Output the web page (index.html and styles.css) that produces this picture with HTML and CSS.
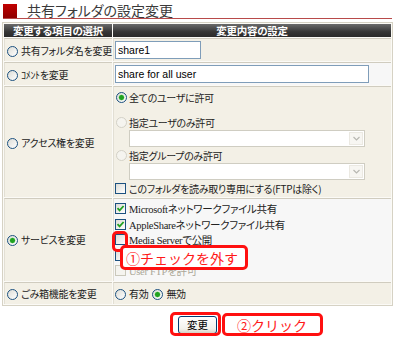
FILE: index.html
```html
<!DOCTYPE html>
<html lang="ja">
<head>
    <meta charset="UTF-8">
    <title>共有フォルダの設定変更</title>
    <link rel="stylesheet" href="styles.css">
</head>
<body>
<div class="page">
    <div class="title"><span class="mark"></span>共有フォルダの設定変更</div>

    <table class="form">
        <tr>
            <th class="col-item">変更する項目の選択</th>
            <th>変更内容の設定</th>
        </tr>
        <tr>
            <td class="item"><span class="rb"></span>共有フォルダ名を変更</td>
            <td class="val"><input class="txt short" type="text" value="share1"></td>
        </tr>
        <tr>
            <td class="item"><span class="rb"></span>ｺﾒﾝﾄを変更</td>
            <td class="val alt"><input class="txt long" type="text" value="share for all user"></td>
        </tr>
        <tr>
            <td class="item"><span class="rb"></span>アクセス権を変更</td>
            <td class="val access">
                <div class="opt"><span class="rb on"></span>全てのユーザに許可</div>
                <div class="opt gap"><span class="rb dis"></span>指定ユーザのみ許可</div>
                <div class="sel"><span class="arr"><svg width="7" height="5" viewBox="0 0 7 5"><path d="M0.5 1 L3.5 4 L6.5 1" fill="none" stroke="#b8b8b2" stroke-width="1.2"/></svg></span></div>
                <div class="opt"><span class="rb dis"></span>指定グループのみ許可</div>
                <div class="sel"><span class="arr"><svg width="7" height="5" viewBox="0 0 7 5"><path d="M0.5 1 L3.5 4 L6.5 1" fill="none" stroke="#b8b8b2" stroke-width="1.2"/></svg></span></div>
                <div class="opt last"><span class="cb"></span>このフォルダを読み取り専用にする(FTPは除く)</div>
            </td>
        </tr>
        <tr>
            <td class="item"><span class="rb on"></span>サービスを変更</td>
            <td class="val alt service">
                <div class="svc"><span class="cb"><svg width="9" height="9" viewBox="0 0 9 9"><path d="M1.5 4.2 L3.6 6.4 L7.6 2" fill="none" stroke="#21a121" stroke-width="1.8"/></svg></span>Microsoftネットワークファイル共有</div>
                <div class="svc"><span class="cb"><svg width="9" height="9" viewBox="0 0 9 9"><path d="M1.5 4.2 L3.6 6.4 L7.6 2" fill="none" stroke="#21a121" stroke-width="1.8"/></svg></span>AppleShareネットワークファイル共有</div>
                <div class="svc"><span class="cb"></span>Media Serverで公開</div>
                <div class="svc"><span class="cb"></span>iTunes Serverで公開</div>
                <div class="svc dis"><span class="cb dis"></span>User FTPを許可</div>
            </td>
        </tr>
        <tr>
            <td class="item"><span class="rb"></span>ごみ箱機能を変更</td>
            <td class="val trash"><span class="rb"></span>有効<span class="rb on second"></span>無効</td>
        </tr>
    </table>

    <div class="submit"><button class="btn" type="button">変更</button></div>

    <div class="note-frame frame-check"></div>
    <div class="note-text text-check">①チェックを外す</div>
    <div class="note-frame frame-btn"></div>
    <div class="note-text text-btn">②クリック</div>
</div>
</body>
</html>
```

FILE: styles.css
```css
body {
    margin: 0;
    background: #fff;
    font-family: "Noto Sans CJK JP", sans-serif;
    font-size: 10px;
    letter-spacing: -0.3px;
    font-feature-settings: "palt";
    color: #222;
}
.page {
    position: relative;
    width: 400px;
    height: 340px;
    padding: 3px 0 0 2px;
    box-sizing: border-box;
}
.title {
    display: flex;
    align-items: flex-end;
    width: 389px;
    height: 15px;
    margin-left: 1px;
    border-bottom: 1px solid #b84a4a;
    font-size: 14px;
    line-height: 15px;
    letter-spacing: 0;
    color: #3a3a3a;
}
.title .mark {
    width: 14px;
    height: 14px;
    margin-right: 10px;
    background: linear-gradient(#c20000, #8e0000);
}
.form {
    width: 391px;
    margin-top: 3px;
    border: 1px solid #d6d2c4;
    border-spacing: 1px;
    background: #fbfaf6;
    table-layout: fixed;
}
.form th {
    height: 13px;
    padding: 0;
    background: linear-gradient(#6a6a6a, #363636 60%, #2a2a2a);
    color: #fff;
    font-size: 10.5px;
    font-weight: bold;
    line-height: 13px;
}
.form th.col-item {
    width: 108px;
}
.form td {
    box-sizing: border-box;
    padding: 2px 1px;
    border-top: 1px solid #d0ccbf;
    border-left: 1px solid #e2dfd4;
    vertical-align: middle;
    background: #f3f0e6;
    white-space: nowrap;
}
.form td.item {
    padding-left: 2px;
}
.form td.alt {
    background: #f7f7f7;
}
.rb {
    display: inline-block;
    box-sizing: border-box;
    width: 11px;
    height: 11px;
    margin-right: 3px;
    border: 1px solid #1c5180;
    border-radius: 50%;
    background: linear-gradient(135deg, #dcdcd6, #fff);
    vertical-align: -2px;
}
.rb.on {
    background: radial-gradient(circle, #21a121 0, #21a121 2px, #6ccf6c 2.6px, transparent 3.2px), linear-gradient(135deg, #dcdcd6, #fff);
}
.rb.dis {
    border-color: #d3d1c7;
    background: #f5f4ef;
}
.cb {
    display: inline-flex;
    align-items: center;
    justify-content: center;
    box-sizing: border-box;
    width: 11px;
    height: 11px;
    margin-right: 3px;
    border: 1px solid #1c5180;
    background: linear-gradient(135deg, #dcdcd7, #fff);
    vertical-align: -2px;
}
.cb.dis {
    border-color: #cac8bb;
    background: #f5f4ef;
}
.txt {
    display: block;
    box-sizing: border-box;
    height: 18px;
    padding: 0 2px;
    border: 1px solid #7f9db9;
    background: #fff;
    font-family: "Liberation Sans", sans-serif;
    font-size: 10.5px;
    letter-spacing: 0;
    color: #000;
}
.txt.short {
    width: 86px;
}
.txt.long {
    width: 254px;
}
.access {
    padding: 2px 1px 0 2px;
}
.opt {
    display: flex;
    align-items: center;
    height: 16px;
}
.opt .rb {
    margin-left: 1px;
    margin-right: 2px;
}
.opt.gap {
    margin-top: 9px;
}
.opt.last {
    height: 14px;
    margin-top: 1px;
}
.sel {
    display: flex;
    justify-content: flex-end;
    align-items: center;
    box-sizing: border-box;
    width: 236px;
    height: 17px;
    margin-left: 14px;
    border: 1px solid #cfcdc2;
    background: #fff;
}
.sel .arr {
    display: flex;
    align-items: center;
    justify-content: center;
    box-sizing: border-box;
    width: 14px;
    height: 13px;
    margin-right: 1px;
    border: 1px solid #ebe9e2;
    background: #f7f6f2;
}
.service {
    padding: 2px 1px 0 2px;
}
.svc {
    display: flex;
    align-items: center;
    height: 15.5px;
    font-family: "Liberation Serif", "Noto Sans CJK JP", serif;
    font-size: 10.5px;
    letter-spacing: -0.3px;
}
.svc.dis {
    color: #aca899;
}
.trash {
    height: 22px;
    padding-left: 3px;
}
.trash .rb.second {
    margin-left: 4px;
}
.submit {
    width: 391px;
    margin-top: 10px;
    text-align: center;
}
.btn {
    width: 39px;
    height: 18px;
    padding: 0;
    border: 1px solid #003c74;
    border-radius: 3px;
    background: linear-gradient(#ffffff, #f2f1eb 75%, #d6d0c5);
    font-family: "Noto Sans CJK JP", sans-serif;
    font-size: 10.5px;
    line-height: 14px;
    color: #000;
}
.note-frame, .note-text {
    position: absolute;
    box-sizing: border-box;
    border: 3px solid #ff1010;
    border-radius: 5px;
}
.note-text {
    display: flex;
    align-items: center;
    padding-left: 3px;
    background: #fff;
    color: #ff1a1a;
    font-size: 14px;
    letter-spacing: 0;
    white-space: nowrap;
    font-feature-settings: normal;
}
.frame-check {
    left: 112px;
    top: 231px;
    width: 16px;
    height: 21px;
}
.text-check {
    left: 120px;
    top: 245px;
    width: 128px;
    height: 25px;
}
.frame-btn {
    left: 170px;
    top: 312px;
    width: 51px;
    height: 24px;
}
.text-btn {
    left: 222px;
    top: 313px;
    width: 101px;
    height: 23px;
    padding-left: 12px;
}
```
